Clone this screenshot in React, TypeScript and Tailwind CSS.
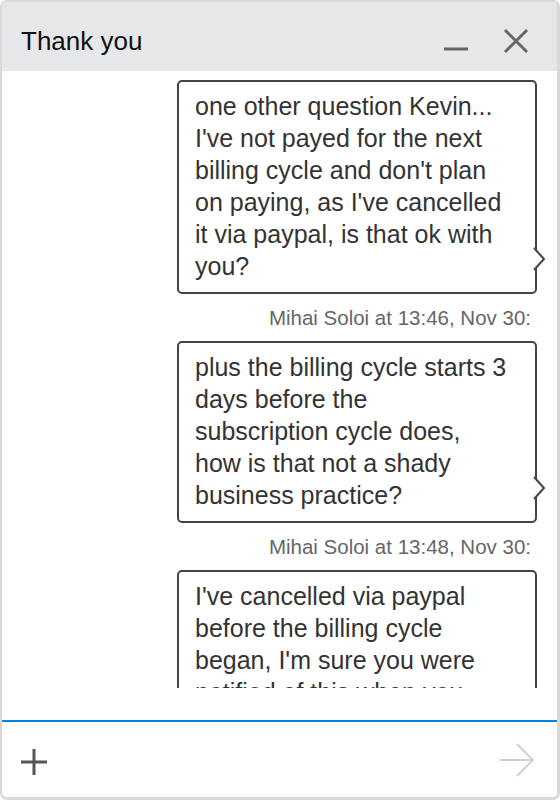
import { Fragment } from 'react';

type Msg = { lines: string[]; meta?: string };

// lines are kept as the chat wrapped them
const messages: Msg[] = [
  {
    lines: [
      'one other question Kevin...',
      "I've not payed for the next",
      "billing cycle and don't plan",
      "on paying, as I've cancelled",
      'it via paypal, is that ok with',
      'you?',
    ],
    meta: 'Mihai Soloi at 13:46, Nov 30:',
  },
  {
    lines: [
      'plus the billing cycle starts 3',
      'days before the',
      'subscription cycle does,',
      'how is that not a shady',
      'business practice?',
    ],
    meta: 'Mihai Soloi at 13:48, Nov 30:',
  },
  {
    lines: [
      "I've cancelled via paypal",
      'before the billing cycle',
      "began, I'm sure you were",
      'notified of this when you',
      'received the cancellation.',
    ],
  },
];

function Bubble({ lines }: { lines: string[] }) {
  return (
    <div className="relative ml-auto mr-[20px] w-[360px] rounded-[5px] border-2 border-[#444] bg-white pt-[8px] pb-[10px] px-[16px] text-[25px] leading-[32px] whitespace-nowrap text-[#333]">
      {lines.map((l, i) => (
        <div key={i}>{l}</div>
      ))}
      <svg
        className="absolute -right-[11px] bottom-[20px] overflow-visible"
        width="13"
        height="26"
        viewBox="0 0 13 26"
      >
        <rect x="0" y="2" width="2.6" height="22" fill="#fff" />
        <polyline points="1,2 11,13 1,24" fill="#fff" stroke="#444" strokeWidth="2" strokeLinejoin="miter" />
      </svg>
    </div>
  );
}

export default function App() {
  return (
    <div
      className="flex h-[800px] w-[560px] flex-col overflow-hidden rounded-[7px] border-2 border-r-[3px] border-b-[3px] border-[#d8d8d8] bg-white"
      style={{ fontFamily: '"Liberation Sans", Arial, sans-serif' }}
    >
      <div className="flex h-[69px] shrink-0 items-center bg-[#e6e7e8] pt-[8px] pl-[19px] pr-[28px]">
        <span className="text-[26px] leading-none text-[#111]">Thank you</span>
        <div className="ml-auto flex items-center gap-[34px]">
          <svg width="26" height="26" viewBox="0 0 26 26">
            <line x1="1" y1="21" x2="25" y2="21" stroke="#666" strokeWidth="3" />
          </svg>
          <svg width="26" height="26" viewBox="0 0 26 26">
            <path d="M2 2 L24 24 M24 2 L2 24" stroke="#666" strokeWidth="3" fill="none" />
          </svg>
        </div>
      </div>

      <div className="min-h-0 flex-1 overflow-hidden pt-[9px]">
        {messages.map((m, i) => (
          <Fragment key={i}>
            <Bubble lines={m.lines} />
            {m.meta && (
              <div className="my-[12px] mr-[26px] text-right text-[20.5px] leading-[23px] text-[#666]">{m.meta}</div>
            )}
          </Fragment>
        ))}
      </div>
      <div className="h-[32px] shrink-0" />

      <div className="flex h-[77px] shrink-0 items-center border-t-2 border-[#0b80e3] pl-[17px] pr-[22px]">
        <svg width="30" height="30" viewBox="0 0 30 30" className="mt-[5px]">
          <path d="M15 2 V28 M2 15 H28" stroke="#555" strokeWidth="3" fill="none" />
        </svg>
        <svg width="36" height="34" viewBox="0 0 36 34" className="ml-auto mt-[1px]">
          <path d="M1 17 H34 M18 1 L34 17 L18 33" stroke="#cfcfcf" strokeWidth="2" fill="none" />
        </svg>
      </div>
    </div>
  );
}
